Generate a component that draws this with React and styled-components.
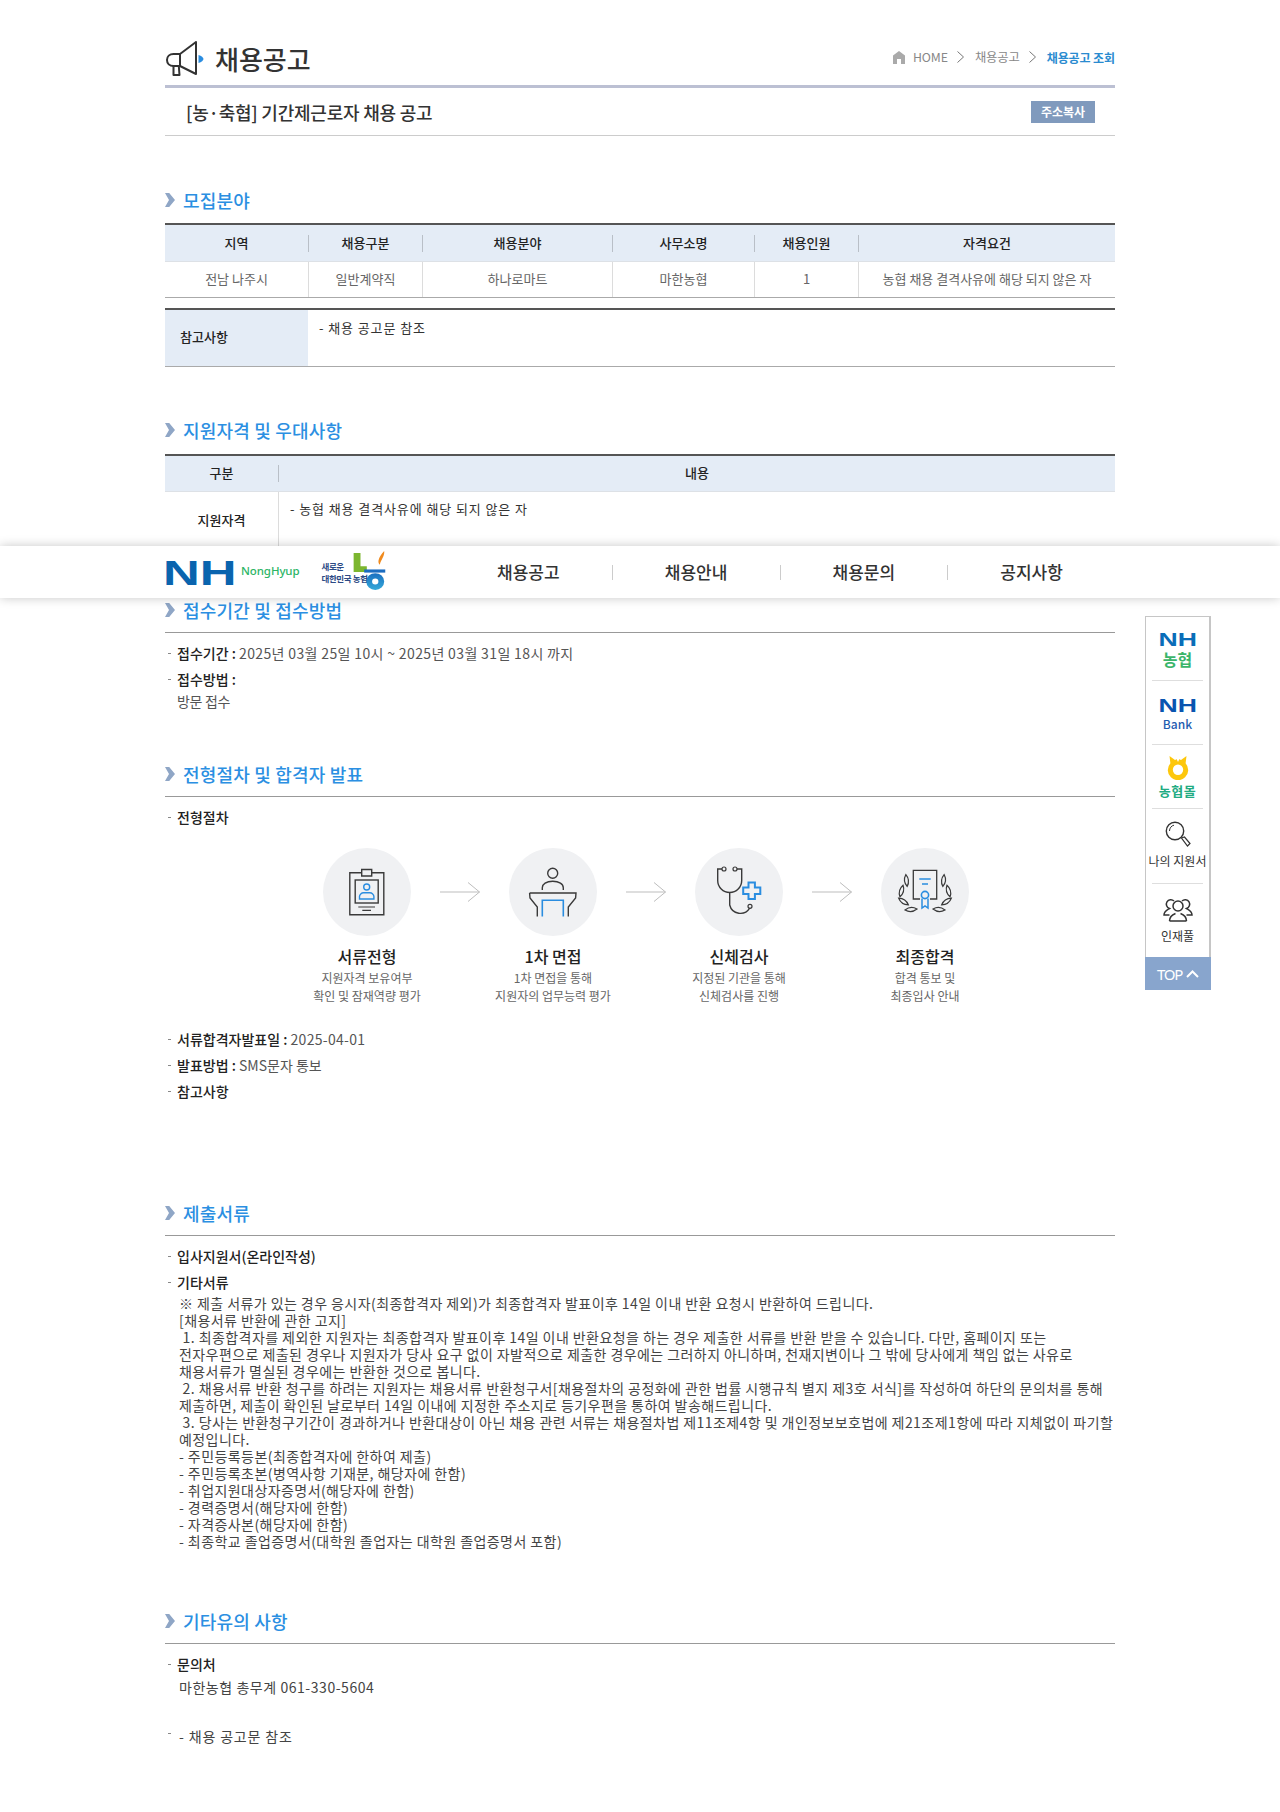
import React from "react";
import styled, { createGlobalStyle } from "styled-components";

const GlobalStyle = createGlobalStyle`
  html, body { margin: 0; padding: 0; background: #fff; }
  body { font-family: "Noto Sans CJK KR", "Noto Sans", sans-serif; color: #333; }
  * { box-sizing: border-box; }
`;

const Page = styled.div`
  position: relative;
  width: 1280px;
  height: 1812px;
  overflow: hidden;
`;
const Content = styled.main`
  width: 950px;
  margin: 0 auto;
`;
const TopBar = styled.header`
  height: 88px;
  padding-bottom: 8px;
  border-bottom: 3px solid #bcc0d3;
  display: flex;
  align-items: flex-end;
  justify-content: space-between;
`;
const PageTitle = styled.h1`
  margin: 0;
  display: flex;
  align-items: center;
  gap: 10px;
  font-size: 26px;
  line-height: 36px;
  font-weight: 500;
  color: #333;
  letter-spacing: 0;
`;
const Crumbs = styled.nav`
  display: flex;
  align-items: center;
  height: 20px;
  margin-bottom: 10px;
  font-size: 12.3px;
  color: #888;
  letter-spacing: -0.1px;
`;
const Crumb = styled.span`
  font-size: ${(p) => (p.$on ? "12px" : "12.3px")};
  font-weight: ${(p) => (p.$on ? 700 : 400)};
  color: ${(p) => (p.$on ? "#2a8bd0" : "#888")};
`;
const CrumbGap = styled.svg`
  margin: 0 11px 0 9px;
`;
const SubBar = styled.div`
  height: 48px;
  padding: 0 20px 0 21px;
  border-bottom: 1px solid #ccc;
  display: flex;
  align-items: center;
  justify-content: space-between;
`;
const SubTitle = styled.h2`
  margin: 0;
  font-size: 18px;
  font-weight: 500;
  color: #333;
  letter-spacing: -0.22px;
`;
const CopyButton = styled.button`
  width: 64px;
  height: 22px;
  padding: 0;
  border: 0;
  background: #809abd;
  color: #fff;
  font: 700 12px "Noto Sans CJK KR", sans-serif;
`;
const SectionHead = styled.h3`
  margin: ${(p) => p.$top}px 0 0;
  height: ${(p) => (p.$rule ? 35 : 24)}px;
  padding-bottom: ${(p) => (p.$rule ? 10 : 0)}px;
  border-bottom: ${(p) => (p.$rule ? "1px solid #999" : "0")};
  display: flex;
  align-items: center;
  gap: 8px;
  font-size: 18px;
  line-height: 24px;
  font-weight: 500;
  color: #2b8fe2;
  letter-spacing: 0.2px;
`;
const Board = styled.div`
  margin-top: ${(p) => p.$top}px;
  border-top: 2px solid #555;
  border-bottom: ${(p) => (p.$open ? "0" : "1px solid #aaa")};
`;
const GridRow = styled.div`
  display: grid;
  grid-template-columns: ${(p) => p.$cols};
  height: ${(p) => p.$h}px;
  align-items: ${(p) => (p.$head ? "center" : "stretch")};
  background: ${(p) => (p.$head ? "#e4ecf6" : "#fff")};
  border-bottom: ${(p) => (p.$head ? "1px solid #dde1e6" : "0")};
`;
const HeadCell = styled.div`
  height: 17px;
  line-height: 15px;
  text-align: center;
  font-size: 13px;
  font-weight: 500;
  color: #222;
  border-left: ${(p) => (p.$first ? "0" : "1px solid #b9bfc7")};
`;
const BodyCell = styled.div`
  display: flex;
  align-items: center;
  justify-content: center;
  padding-bottom: 2px;
  font-size: 13px;
  color: #666;
  border-left: ${(p) => (p.$first ? "0" : "1px solid #dcdcdc")};
`;
const SideLabel = styled.div`
  padding: ${(p) => p.$pad};
  font-size: 13px;
  font-weight: 500;
  line-height: 18px;
  color: #222;
  text-align: ${(p) => p.$align || "left"};
  background: ${(p) => (p.$tint ? "#e4ecf6" : "#fff")};
`;
const NoteText = styled.div`
  padding: ${(p) => p.$pad};
  font-size: 13px;
  line-height: 18px;
  color: #333;
  letter-spacing: 0.9px;
  border-left: ${(p) => (p.$line ? "1px solid #dcdcdc" : "0")};
`;
const Items = styled.ul`
  list-style: none;
  margin: ${(p) => p.$top || 7}px 0 0;
  padding: 0;
`;
const Item = styled.li`
  position: relative;
  margin-top: ${(p) => p.$gap || 0}px;
  padding-left: 12px;
  font-size: 14px;
  line-height: 26px;
  color: #555;
  letter-spacing: -0.3px;
  &::before {
    content: "";
    position: absolute;
    left: 3px;
    top: ${(p) => p.$dash || 13}px;
    width: 3px;
    height: 1px;
    background: #888;
  }
`;
const Label = styled.b`
  color: #222;
  font-weight: 500;
  letter-spacing: 0;
`;
const Value = styled.span`
  letter-spacing: ${(p) => p.$ls}px;
`;
const Plain = styled.div`
  line-height: 19px;
  color: #555;
`;
const Paper = styled.div`
  margin-left: 2px;
  font-size: 14px;
  line-height: 17px;
  color: #444;
  white-space: pre;
  letter-spacing: 0.43px;
`;
const Contact = styled.div`
  margin: -2px 0 0 2px;
  font-size: 14px;
  line-height: 24px;
  color: #444;
  letter-spacing: 0.55px;
`;
const Remark = styled.div`
  margin-left: 2px;
  font-size: 14px;
  line-height: 26px;
  color: #444;
  letter-spacing: 0.85px;
`;
const Steps = styled.div`
  display: flex;
  margin: 18px 0 0 158px;
`;
const Step = styled.div`
  width: 88px;
  display: flex;
  flex-direction: column;
  align-items: center;
`;
const Disc = styled.div`
  width: 88px;
  height: 88px;
  border-radius: 50%;
  background: #f0f1f3;
  flex: none;
`;
const StepName = styled.div`
  margin-top: 10px;
  font-size: 16px;
  line-height: 20px;
  font-weight: 500;
  color: #222;
  white-space: nowrap;
`;
const StepDesc = styled.div`
  margin-top: 3px;
  font-size: 12px;
  line-height: 18px;
  color: #666;
  text-align: center;
  white-space: nowrap;
`;
const Connector = styled.div`
  width: 98px;
  height: 88px;
  display: flex;
  align-items: center;
  justify-content: center;
`;
const MainNav = styled.div`
  position: absolute;
  left: 0;
  right: 0;
  top: 546px;
  height: 52px;
  background: #fff;
  box-shadow: 0 0 10px rgba(0, 0, 0, 0.22);
`;
const NavInner = styled.div`
  width: 950px;
  height: 100%;
  margin: 0 auto;
  display: flex;
  align-items: center;
`;
const Brand = styled.div`
  width: 280px;
  display: flex;
  align-items: center;
`;
const NavLinks = styled.div`
  flex: 1;
  display: flex;
  align-items: center;
`;
const NavLink = styled.a`
  flex: 1;
  height: 15px;
  padding-bottom: 2px;
  display: flex;
  align-items: center;
  justify-content: center;
  font-size: 17px;
  font-weight: 500;
  color: #333;
  border-left: ${(p) => (p.$first ? "0" : "1px solid #ccc")};
`;
const BrandName = styled.span`
  margin: 0 0 3px 4px;
  font: 500 11.5px "Noto Sans", sans-serif;
  color: #2db566;
  letter-spacing: -0.1px;
`;
const Slogan = styled.span`
  margin-left: 22px;
  width: 31px;
  font-size: 8.5px;
  line-height: 12px;
  font-weight: 700;
  color: #2c4a85;
  white-space: nowrap;
  letter-spacing: -0.4px;
`;
const SidePanel = styled.aside`
  position: absolute;
  left: 1145px;
  top: 616px;
  width: 66px;
  border: 1px solid #c6c6c6;
  border-width: 1px 2px 0 1px;
`;
const SideItem = styled.a`
  display: flex;
  flex-direction: column;
  align-items: center;
  justify-content: flex-start;
  height: ${(p) => p.$h}px;
  padding-top: ${(p) => p.$pad}px;
  margin: 0 6px;
  border-bottom: ${(p) => (p.$last ? "0" : "1px solid #dedede")};
  white-space: nowrap;
`;
const SideCaption = styled.span`
  margin-top: ${(p) => p.$top}px;
  font-size: 12px;
  line-height: 16px;
  color: #333;
  letter-spacing: 0;
`;
const NHMark = styled.span`
  font: 700 19px/22px "Liberation Sans", sans-serif;
  color: ${(p) => p.$c};
  transform: scaleX(1.4);
`;
const NHSub = styled.span`
  margin-top: ${(p) => p.$top}px;
  font-size: ${(p) => p.$size}px;
  line-height: ${(p) => p.$lh}px;
  font-weight: ${(p) => p.$w};
  color: ${(p) => p.$c};
  letter-spacing: ${(p) => p.$ls || 0}px;
`;
const TopLink = styled.a`
  display: flex;
  align-items: center;
  justify-content: center;
  gap: 4px;
  height: 33px;
  margin: 0 -2px 0 -1px;
  background: #88a5cd;
  color: #fff;
  font: 400 15px "Noto Sans", sans-serif;
  letter-spacing: -1.2px;
`;

const Chevron = () => (
  <svg width="10" height="14" viewBox="0 0 10 14">
    <path d="M0 0h4.2L10 7l-5.8 7H0l4-7z" fill="#8fa6c6" />
  </svg>
);
const Megaphone = () => (
  <svg width="40" height="36" viewBox="0 0 40 36" fill="none">
    <path d="M31 1v32L15 25H8.500C4.500 25 2 22.400 2 19s2.500-6 6.500-6H15z" stroke="#333" strokeWidth="2" strokeLinejoin="round" />
    <path d="M15 13v12M8.500 25v9h6l-.7-9" stroke="#333" strokeWidth="2" strokeLinejoin="round" />
    <path d="M33.500 14c3 1 5 2.500 5 4s-2 3-5 4z" fill="#2a8de0" />
  </svg>
);
const Home = () => (
  <svg width="12" height="13" viewBox="0 0 12 13" style={{ marginRight: 8 }}>
    <path d="M6 0L0 4.600V13h4V8h4v5h4V4.600z" fill="#aaa" />
  </svg>
);
const CrumbArrow = () => (
  <CrumbGap width="7" height="12" viewBox="0 0 7 12" fill="none">
    <path d="M.5.5L6.500 6l-6 5.500" stroke="#777" />
  </CrumbGap>
);
const Arrow = () => (
  <svg width="40" height="20" viewBox="0 0 40 20" fill="none">
    <path d="M0 10h39.500M28 .5L39.500 10 28 19.500" stroke="#bdbdbd" />
  </svg>
);
const IconCard = () => (
  <svg width="88" height="88" viewBox="0 0 88 88" fill="none">
    <path d="M38.700 24.800H26.800v42h34v-42H48.700M38.700 28V21.500h10V28h-10z" stroke="#3a3a3a" strokeWidth="1.400" />
    <rect x="32.200" y="32" width="23" height="23" stroke="#3a3a3a" strokeWidth="1.400" />
    <circle cx="43.700" cy="39" r="3" stroke="#2a8de0" strokeWidth="1.400" />
    <path d="M36.500 51v-2.500c0-2 2-3.700 4-3.700h6.400c2 0 4 1.700 4 3.700V51z" stroke="#2a8de0" strokeWidth="1.400" />
    <path d="M35.300 59H52M39.300 62.300H48" stroke="#3a3a3a" strokeWidth="1.200" />
  </svg>
);
const IconDesk = () => (
  <svg width="88" height="88" viewBox="0 0 88 88" fill="none">
    <circle cx="43.700" cy="25.200" r="5" stroke="#3a3a3a" strokeWidth="1.400" />
    <path d="M33.300 42v-2.300c0-3.700 4-6.400 10.400-6.400s10.600 2.700 10.600 6.400V42" stroke="#3a3a3a" strokeWidth="1.400" />
    <path d="M20.600 45H67l-.4 5-7.300 9v9.500M20.600 45l.4 5 7.300 9v9.500" stroke="#3a3a3a" strokeWidth="1.400" />
    <path d="M33.300 68.500V52.300h21v16.200" stroke="#2a8de0" strokeWidth="1.600" />
  </svg>
);
const IconScope = () => (
  <svg width="88" height="88" viewBox="0 0 88 88" fill="none">
    <path d="M27 21h-4.300v11.500a12 12 0 0 0 24 0V21H42M34.700 44.500V57a11 11 0 0 0 20 3.200" stroke="#3a3a3a" strokeWidth="1.400" />
    <circle cx="29" cy="21" r="2" stroke="#3a3a3a" strokeWidth="1.200" />
    <circle cx="40" cy="21" r="2" stroke="#3a3a3a" strokeWidth="1.200" />
    <circle cx="55" cy="58.300" r="2" stroke="#3a3a3a" strokeWidth="1.200" />
    <path d="M53.500 34.500h6.400v5h5.400v6.400h-5.400v5h-6.400v-5h-5.300v-6.400h5.300z" fill="#f0f1f3" stroke="#2a8de0" strokeWidth="2" />
  </svg>
);
const Leaf = ({ x, y, r }) => (
  <path transform={`translate(${x} ${y}) rotate(${r})`} d="M0-6Q4 0 0 6Q-4 0 0-6z" stroke="#3a3a3a" strokeWidth="1.200" />
);
const IconAward = () => (
  <svg width="88" height="88" viewBox="0 0 88 88" fill="none">
    <path d="M39 51h-6.700V22.300h23.400V51H49" stroke="#3a3a3a" strokeWidth="1.300" />
    <path d="M38.300 31h11.400M41 36h6" stroke="#2a8de0" strokeWidth="1.500" />
    <circle cx="44" cy="47" r="3.600" stroke="#2a8de0" strokeWidth="1.600" />
    <path d="M41 50.500V60l3-2 3 2v-9.500" stroke="#2a8de0" strokeWidth="1.500" />
    <Leaf x={25.500} y={32.500} r={-6} />
    <Leaf x={20.500} y={43} r={15} />
    <Leaf x={22.500} y={53.500} r={-55} />
    <Leaf x={30} y={61.500} r={85} />
    <Leaf x={62.500} y={32.500} r={6} />
    <Leaf x={67.500} y={43} r={-15} />
    <Leaf x={65.500} y={53.500} r={55} />
    <Leaf x={58} y={61.500} r={-85} />
  </svg>
);
const NHLogo = () => (
  <svg width="74" height="42" viewBox="0 0 74 42" style={{ marginLeft: -2 }}>
    <text x="0" y="33.500" fontFamily="Liberation Sans" fontWeight="700" fontSize="35" fill="#0a64ae" textLength="73.500" lengthAdjust="spacingAndGlyphs">NH</text>
  </svg>
);
const NongMark = () => (
  <svg width="45" height="39" viewBox="0 0 42 37" style={{ marginLeft: -5, marginTop: -3 }}>
    <defs>
      <linearGradient id="nongBlue" x1="0" y1="0" x2="0" y2="1">
        <stop offset="0" stopColor="#1a6fc0" />
        <stop offset="1" stopColor="#35a9d9" />
      </linearGradient>
    </defs>
    <path d="M5 2h6.500v12.500h6V20H5z" fill="#7cb62f" />
    <path d="M34 0c.6 5-3 8-4.200 13 -2.500-2.200-1.400-6.800 4.200-13z" fill="#f08a1d" />
    <path d="M15 17.500h20v3H15z" fill="#1b6cc0" />
    <path d="M25.500 21a8.500 8 0 1 1 0 16 8.500 8 0 0 1 0-16zm0 5.200a3 2.800 0 1 0 0 5.600 3 2.800 0 0 0 0-5.600z" fill="url(#nongBlue)" />
  </svg>
);
const Ring = () => (
  <svg width="22" height="24" viewBox="0 0 22 24">
    <path d="M2.500 0L8 4l3-1.500L14 4l5.500-4-.9 7.200A10.200 10.200 0 1 1 3.400 7.200z" fill="#fdc70c" />
    <circle cx="11" cy="13.800" r="5.200" fill="#fff" />
    <path d="M8.200 0L11 6l2.800-6L11 2z" fill="#fff" />
  </svg>
);
const Lens = () => (
  <svg width="26" height="26" viewBox="0 0 26 26" fill="none">
    <circle cx="10" cy="10" r="8.700" stroke="#333" strokeWidth="1.400" />
    <path d="M4.500 10c0-3 2-5.400 4.500-5.800" stroke="#333" />
    <path d="M16.500 17l3-1 5.500 6.500-2.500 2.500z" stroke="#333" strokeWidth="1.200" />
  </svg>
);
const People = () => (
  <svg width="30" height="27" viewBox="0 0 30 27" fill="none" stroke="#333" strokeWidth="1.500">
    <circle cx="15" cy="11" r="5" />
    <path d="M6.500 26c0-5 3.500-6.500 6-7.500M23.500 26c0-5-3.500-6.500-6-7.500M6.500 26h17" />
    <path d="M11 6a4.500 4.500 0 1 0-4.500 7.500C4 15 1 16 1 20h5.500" />
    <path d="M19 6a4.500 4.500 0 1 1 4.500 7.500C26 15 29 16 29 20h-5.500" />
  </svg>
);
const Up = () => (
  <svg width="13" height="8" viewBox="0 0 13 8" fill="none">
    <path d="M1 7l5.500-5.500L12 7" stroke="#fff" strokeWidth="2" />
  </svg>
);

const fieldCols = "143px 114px 190px 142px 104px 257px";
const fieldHeads = ["지역", "채용구분", "채용분야", "사무소명", "채용인원", "자격요건"];
const fieldVals = ["전남 나주시", "일반계약직", "하나로마트", "마한농협", "1", "농협 채용 결격사유에 해당 되지 않은 자"];

const steps = [
  { name: "서류전형", desc: ["지원자격 보유여부", "확인 및 잠재역량 평가"], Icon: IconCard },
  { name: "1차 면접", desc: ["1차 면접을 통해", "지원자의 업무능력 평가"], Icon: IconDesk },
  { name: "신체검사", desc: ["지정된 기관을 통해", "신체검사를 진행"], Icon: IconScope },
  { name: "최종합격", desc: ["합격 통보 및", "최종입사 안내"], Icon: IconAward },
];

const paperText = `※ 제출 서류가 있는 경우 응시자(최종합격자 제외)가 최종합격자 발표이후 14일 이내 반환 요청시 반환하여 드립니다.
[채용서류 반환에 관한 고지]
 1. 최종합격자를 제외한 지원자는 최종합격자 발표이후 14일 이내 반환요청을 하는 경우 제출한 서류를 반환 받을 수 있습니다. 다만, 홈페이지 또는
전자우편으로 제출된 경우나 지원자가 당사 요구 없이 자발적으로 제출한 경우에는 그러하지 아니하며, 천재지변이나 그 밖에 당사에게 책임 없는 사유로
채용서류가 멸실된 경우에는 반환한 것으로 봅니다.
 2. 채용서류 반환 청구를 하려는 지원자는 채용서류 반환청구서[채용절차의 공정화에 관한 법률 시행규칙 별지 제3호 서식]를 작성하여 하단의 문의처를 통해
제출하면, 제출이 확인된 날로부터 14일 이내에 지정한 주소지로 등기우편을 통하여 발송해드립니다.
 3. 당사는 반환청구기간이 경과하거나 반환대상이 아닌 채용 관련 서류는 채용절차법 제11조제4항 및 개인정보보호법에 제21조제1항에 따라 지체없이 파기할
예정입니다.
- 주민등록등본(최종합격자에 한하여 제출)
- 주민등록초본(병역사항 기재분, 해당자에 한함)
- 취업지원대상자증명서(해당자에 한함)
- 경력증명서(해당자에 한함)
- 자격증사본(해당자에 한함)
- 최종학교 졸업증명서(대학원 졸업자는 대학원 졸업증명서 포함)`;

export default function App() {
  return (
    <Page>
      <GlobalStyle />
      <Content>
        <TopBar>
          <PageTitle><Megaphone />채용공고</PageTitle>
          <Crumbs>
            <Home />
            <Crumb>HOME</Crumb>
            <CrumbArrow />
            <Crumb>채용공고</Crumb>
            <CrumbArrow />
            <Crumb $on>채용공고 조회</Crumb>
          </Crumbs>
        </TopBar>
        <SubBar>
          <SubTitle>[농·축협] 기간제근로자 채용 공고</SubTitle>
          <CopyButton>주소복사</CopyButton>
        </SubBar>

        <SectionHead $top={52}><Chevron />모집분야</SectionHead>
        <Board $top={11}>
          <GridRow $cols={fieldCols} $h={37} $head>
            {fieldHeads.map((h, i) => <HeadCell key={h} $first={i === 0}>{h}</HeadCell>)}
          </GridRow>
          <GridRow $cols={fieldCols} $h={35}>
            {fieldVals.map((v, i) => <BodyCell key={v} $first={i === 0}>{v}</BodyCell>)}
          </GridRow>
        </Board>
        <Board $top={10}>
          <GridRow $cols="143px 1fr" $h={56}>
            <SideLabel $tint $pad="18px 15px">참고사항</SideLabel>
            <NoteText $pad="9px 11px">- 채용 공고문 참조</NoteText>
          </GridRow>
        </Board>

        <SectionHead $top={51}><Chevron />지원자격 및 우대사항</SectionHead>
        <Board $top={12} $open>
          <GridRow $cols="113px 1fr" $h={36} $head>
            <HeadCell $first>구분</HeadCell>
            <HeadCell>내용</HeadCell>
          </GridRow>
          <GridRow $cols="113px 1fr" $h={54}>
            <SideLabel $align="center" $pad="19px 0 17px">지원자격</SideLabel>
            <NoteText $line $pad="8px 11px">- 농협 채용 결격사유에 해당 되지 않은 자</NoteText>
          </GridRow>
        </Board>

        <SectionHead $top={52} $rule><Chevron />접수기간 및 접수방법</SectionHead>
        <Items>
          <Item><Label>접수기간 : </Label><Value $ls={0.36}>2025년 03월 25일 10시 ~ 2025년 03월 31일 18시 까지</Value></Item>
          <Item><Label>접수방법 : </Label><Plain>방문 접수</Plain></Item>
        </Items>

        <SectionHead $top={51} $rule><Chevron />전형절차 및 합격자 발표</SectionHead>
        <Items><Item><Label>전형절차</Label></Item></Items>
        <Steps>
          {steps.map(({ name, desc, Icon }, i) => (
            <React.Fragment key={name}>
              {i > 0 && <Connector><Arrow /></Connector>}
              <Step>
                <Disc><Icon /></Disc>
                <StepName>{name}</StepName>
                <StepDesc>{desc[0]}<br />{desc[1]}</StepDesc>
              </Step>
            </React.Fragment>
          ))}
        </Steps>
        <Items $top={21}>
          <Item><Label>서류합격자발표일 : </Label><Value $ls={0.3}>2025-04-01</Value></Item>
          <Item><Label>발표방법 : </Label><Value $ls={0}>SMS문자 통보</Value></Item>
          <Item><Label>참고사항</Label></Item>
        </Items>

        <SectionHead $top={97} $rule><Chevron />제출서류</SectionHead>
        <Items>
          <Item><Label>입사지원서(온라인작성)</Label></Item>
          <Item><Label>기타서류</Label><Paper>{paperText}</Paper></Item>
        </Items>

        <SectionHead $top={59} $rule><Chevron />기타유의 사항</SectionHead>
        <Items>
          <Item><Label>문의처</Label><Contact>마한농협 총무계 061-330-5604</Contact></Item>
          <Item $dash={10} $gap={24}><Remark>- 채용 공고문 참조</Remark></Item>
        </Items>
      </Content>

      <MainNav>
        <NavInner>
          <Brand>
            <NHLogo />
            <BrandName>NongHyup</BrandName>
            <Slogan>새로운<br />대한민국 농협</Slogan>
            <NongMark />
          </Brand>
          <NavLinks>
            <NavLink $first>채용공고</NavLink>
            <NavLink>채용안내</NavLink>
            <NavLink>채용문의</NavLink>
            <NavLink>공지사항</NavLink>
          </NavLinks>
        </NavInner>
      </MainNav>

      <SidePanel>
        <SideItem $h={64} $pad={12}>
          <NHMark $c="#0a6db8">NH</NHMark>
          <NHSub $top={0} $size={16} $lh={17} $w={700} $c="#3bb56a">농협</NHSub>
        </SideItem>
        <SideItem $h={64} $pad={14}>
          <NHMark $c="#0a55b0">NH</NHMark>
          <NHSub $top={0} $size={12} $lh={14} $w={500} $c="#1f5db0">Bank</NHSub>
        </SideItem>
        <SideItem $h={64} $pad={11}>
          <Ring />
          <NHSub $top={3} $size={13} $lh={15} $w={700} $c="#22ab82" $ls={0.6}>농협몰</NHSub>
        </SideItem>
        <SideItem $h={75} $pad={12}>
          <Lens />
          <SideCaption $top={6}>나의 지원서</SideCaption>
        </SideItem>
        <SideItem $h={73} $pad={11} $last>
          <People />
          <SideCaption $top={6}>인재풀</SideCaption>
        </SideItem>
        <TopLink>TOP <Up /></TopLink>
      </SidePanel>
    </Page>
  );
}
